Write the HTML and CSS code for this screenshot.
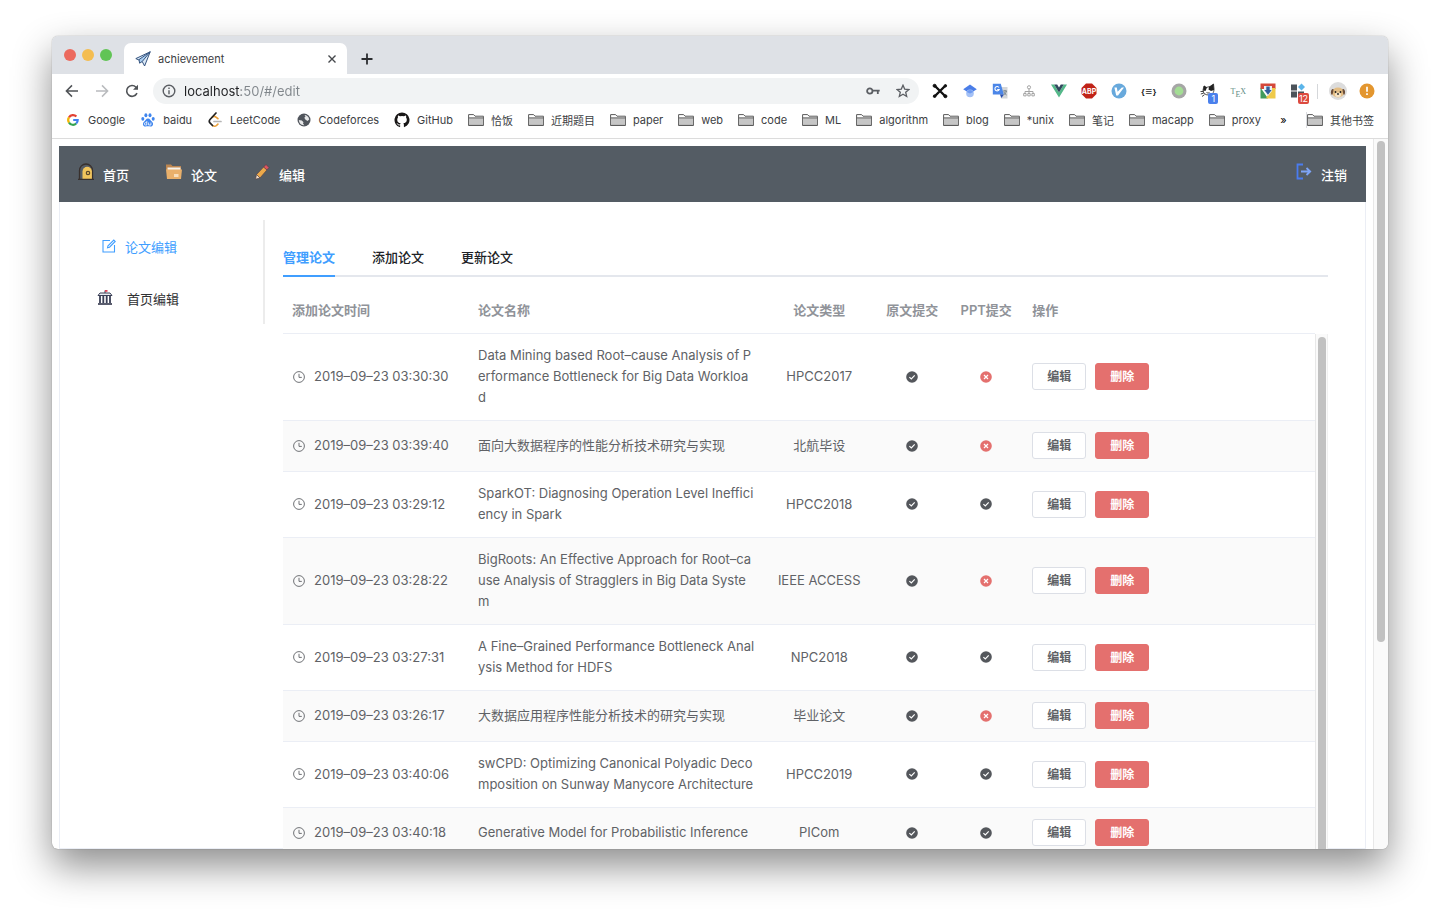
FILE: index.html
```html
<!DOCTYPE html>
<html lang="zh-CN">
<head>
    <meta charset="UTF-8">
    <meta name="viewport" content="width=device-width, initial-scale=1.0">
    <title>achievement</title>
    <link rel="stylesheet" href="styles.css">
</head>
<body>
    <svg class="sprite" width="0" height="0" aria-hidden="true">
        <symbol id="folder" viewBox="0 0 16 14">
            <path d="M.6 12.4V1.6h5l1.4 1.6h8.4v9.2z" fill="#fff" stroke="#5a5a5a" stroke-width="1"/>
            <path d="M1 5h14v7H1z" fill="#c6c6c6"/>
            <path d="M.6 4.9h14.8M.6 12.4h14.8" stroke="#5a5a5a" fill="none"/>
        </symbol>
        <symbol id="clock" viewBox="0 0 12 12">
            <circle cx="6" cy="6" r="5.4"/>
            <path d="M6 2.8v3.6h2.8"/>
        </symbol>
        <symbol id="check" viewBox="0 0 12 12">
            <circle cx="6" cy="6" r="5.8" fill="#54575c"/>
            <path d="M3.4 6.1l1.9 1.8 3.4-3.5" fill="none" stroke="#fff" stroke-width="1.2"/>
        </symbol>
        <symbol id="cross" viewBox="0 0 12 12">
            <circle cx="6" cy="6" r="5.8" fill="#e4706e"/>
            <path d="M4 4l4 4M8 4L4 8" fill="none" stroke="#fff" stroke-width="1.2"/>
        </symbol>
    </svg>

    <div class="window">
        <div class="tab-strip">
            <div class="lights">
                <span class="light red"></span>
                <span class="light yellow"></span>
                <span class="light green"></span>
            </div>
            <div class="browser-tab">
                <svg width="16" height="16" viewBox="0 0 16 16" fill="#dbe9f7" stroke="#35547f" stroke-width="1" stroke-linejoin="round"><path d="M.8 7.6L15.2.8 9.6 15 7.2 10.5z"/><path d="M4 8.6L15.2.8 7.2 10.5 4.6 12.2z" fill="#a9cdf0"/></svg>
                <span class="tab-title">achievement</span>
                <button class="icon-btn" aria-label="Close tab"><svg width="10" height="10" viewBox="0 0 10 10" stroke="#45484c" stroke-width="1.4"><path d="M1.5 1.5l7 7M8.5 1.5l-7 7"/></svg></button>
            </div>
            <button class="icon-btn new-tab" aria-label="New tab"><svg width="12" height="12" viewBox="0 0 12 12" stroke="#2b2d30" stroke-width="1.8"><path d="M6 .5v11M.5 6h11"/></svg></button>
        </div>

        <div class="toolbar">
            <div class="nav-buttons">
                <button class="icon-btn" aria-label="Back"><svg width="14" height="14" viewBox="0 0 14 14" fill="none" stroke="#505357" stroke-width="1.5"><path d="M13 7H1.8M7 1.4L1.4 7 7 12.6"/></svg></button>
                <button class="icon-btn" aria-label="Forward"><svg width="14" height="14" viewBox="0 0 14 14" fill="none" stroke="#b9bbbe" stroke-width="1.5"><path d="M1 7h11.2M7 1.4L12.6 7 7 12.6"/></svg></button>
                <button class="icon-btn" aria-label="Reload"><svg width="14" height="14" viewBox="0 0 14 14" fill="none" stroke="#505357" stroke-width="1.6"><path d="M12 9.2A5.4 5.4 0 1 1 11 3.2l1 1.2"/><path d="M13 .8v5H8z" fill="#505357" stroke="none"/></svg></button>
            </div>
            <div class="omnibox">
                <svg width="14" height="14" viewBox="0 0 14 14" fill="none" stroke="#5b5e63" stroke-width="1.4"><circle cx="7" cy="7" r="5.8"/><path d="M7 6.2v4M7 3.6v1.5"/></svg>
                <input class="url" type="text" value="localhost:50/#/edit" aria-label="Address">
                <button class="icon-btn" aria-label="Passwords"><svg width="14" height="10" viewBox="0 0 14 10" fill="none" stroke="#5b5e63" stroke-width="1.8"><circle cx="3.8" cy="5" r="2.7"/><path d="M6.5 4.6h7.2M11.8 4.6v3.4"/></svg></button>
                <button class="icon-btn" aria-label="Bookmark"><svg width="14" height="14" viewBox="0 0 14 14" fill="none" stroke="#5b5e63" stroke-width="1.3"><path d="M7 1.2l1.7 3.9 4.2.4-3.2 2.8 1 4.2L7 10.3l-3.7 2.2 1-4.2L1.1 5.500l4.2-.4z"/></svg></button>
            </div>
            <div class="extensions">
                <button class="icon-btn ext" aria-label="Extension"><svg width="16" height="16" viewBox="0 0 16 16" stroke="#111" fill="#111"><path d="M3 3l10 10M13 3L3 13" stroke-width="2.4"/><circle cx="2.600" cy="2.800" r="1.500"/><circle cx="13.400" cy="2.800" r="1.200"/><circle cx="2.600" cy="13.200" r="1.300"/><circle cx="13.400" cy="13.200" r="1.500"/></svg></button>
                <button class="icon-btn ext" aria-label="Scholar"><svg width="14" height="14" viewBox="0 0 14 14"><path d="M7 .5l6.800 4.700L7 9.500.2 5.200z" fill="#4a7de8"/><circle cx="7" cy="9.400" r="3.800" fill="#a4c1f6"/><path d="M3.600 8a4 4 0 0 1 6.800 0L7 9.500z" fill="#6e9af0"/></svg></button>
                <button class="icon-btn ext" aria-label="Translate"><svg width="16" height="16" viewBox="0 0 16 16"><path d="M6 4h9.500v11.500H9z" fill="#d4d6d8"/><path d="M.8.800h8l3 10.700h-11z" fill="#4b86e8"/><path d="M8 11.500h3.800L9.500 15z" fill="#2a50b0"/><path d="M7 4.500a2.200 2.200 0 1 0 .2 2H5.200" fill="none" stroke="#fff" stroke-width="1.100"/><path d="M11 8h4M13 7v1M14.300 8c-.3 2-1.300 3-2.600 4M12 9c.5 1.500 1.400 2.300 2.600 3" fill="none" stroke="#66747c" stroke-width=".8"/></svg></button>
                <button class="icon-btn ext" aria-label="Sitemap"><svg width="12" height="12" viewBox="0 0 12 12" fill="none" stroke="#a4a4a4"><circle cx="6" cy="2.300" r="1.600"/><path d="M6 4v4M2 8V6.500h8V8"/><path d="M.7 8.500h2.400v2.400H.7zM4.800 8.500h2.400v2.400H4.800zM8.900 8.500h2.400v2.400H8.900z"/></svg></button>
                <button class="icon-btn ext" aria-label="Vue"><svg width="16" height="14" viewBox="0 0 16 14"><path d="M0 .5h3.200L8 8.500l4.800-8H16L8 13.500z" fill="#54b889"/><path d="M3.200.500h3L8 3.400 9.800.5h3L8 8.500z" fill="#30475d"/></svg></button>
                <button class="icon-btn ext" aria-label="Adblock"><svg width="16" height="16" viewBox="0 0 16 16"><path d="M5 .5h6L15.500 5v6L11 15.500H5L.5 11V5z" fill="#c02318"/><text class="abp" x="8" y="10.500" text-anchor="middle">ABP</text></svg></button>
                <button class="icon-btn ext" aria-label="Vimium"><svg width="16" height="16" viewBox="0 0 16 16"><circle cx="8" cy="8" r="7.500" fill="#68a9dc"/><path d="M3.400 4.500h2.400l.8 4.200 4.200-4.200h2.200L7 12.500H5.200z" fill="#fff"/></svg></button>
                <button class="icon-btn ext json" aria-label="JSON">{≡}</button>
                <button class="icon-btn ext" aria-label="Recorder"><svg width="16" height="16" viewBox="0 0 16 16"><circle cx="8" cy="8" r="7.500" fill="#a6a6a6"/><circle cx="8" cy="8" r="4.400" fill="#a3dd94"/></svg></button>
                <button class="icon-btn ext" aria-label="Octo"><svg width="16" height="16" viewBox="0 0 16 16"><path d="M4 3l2 1.500 4-1L13.500 1l.5 5c0 4-2 6-5.500 6S3 10 3 7z" fill="#fff" stroke="#222" stroke-width=".8"/><path d="M4 2.500l3 2L5.500 8 3 7.500zM9 4l4.500-3 .5 6-3 1-2.500-1.500z" fill="#222"/><path d="M.5 8.500h3M.8 11l3-1M2 13.500l2.500-1.800" stroke="#333" stroke-width=".9"/><path d="M6.500 9.500l1.500.6 1.500-.6" fill="none" stroke="#222" stroke-width=".8"/></svg><span class="badge blue">1</span></button>
                <button class="icon-btn ext tex" aria-label="TeX"><span>T<sub>E</sub>X</span></button>
                <button class="icon-btn ext" aria-label="Downloads"><svg width="16" height="16" viewBox="0 0 16 16"><path d="M.5.500h15V6h-15z" fill="#d4483b"/><path d="M.5 4.500l7.500 11H.5z" fill="#419b5c"/><path d="M15.500 5v10.500H6L11 5z" fill="#efca4a"/><path d="M4 3h8v5l-4 5-4-5z" fill="#e8eef4"/><path d="M6.300 3.500h3.400V7h2L8 11.800 4.300 7h2z" fill="#315f9c"/></svg></button>
                <button class="icon-btn ext" aria-label="Apps"><svg width="16" height="16" viewBox="0 0 16 16" fill="#4c535a"><path d="M1 1.500h6v6H1zM1 8.500h6v6H1zM8 8.500h6v6H8z"/><path d="M11.500.5L15 4l-3.500 3.500L8 4z" fill="#5bb5ea"/></svg><span class="badge red-badge">12</span></button>
            </div>
            <span class="divider"></span>
            <button class="icon-btn avatar" aria-label="Profile"><svg width="18" height="18" viewBox="0 0 18 18"><circle cx="9" cy="9" r="9" fill="#dcdcdc"/><ellipse cx="9" cy="10.500" rx="6" ry="5" fill="#e3bd84"/><path d="M3.500 7C1.500 8 1.500 12 3 13c1-1 1.500-4 1.500-6zM14.500 7c2 1 2 5 .5 6-1-1-1.500-4-1.500-6z" fill="#6e4f3a"/><ellipse cx="9" cy="12.700" rx="3" ry="2.300" fill="#f6e3c5"/><circle cx="6.500" cy="10" r=".9" fill="#222"/><circle cx="11.500" cy="10" r=".9" fill="#222"/><circle cx="9" cy="12" r=".9" fill="#222"/></svg></button>
            <button class="icon-btn" aria-label="Update"><svg width="16" height="16" viewBox="0 0 16 16"><circle cx="8" cy="8" r="7.500" fill="#e3962f"/><path d="M8 3.800v5M8 10.300V12" stroke="#fff" stroke-width="1.700"/></svg></button>
        </div>

        <div class="bookmarks">
            <nav class="bookmark-list">
                <a href="#"><svg width="16" height="12" viewBox="0 0 12 12" fill="none" stroke-width="2.200"><path d="M2 3.400A4.700 4.700 0 0 1 9.400 2.600" stroke="#e34133"/><path d="M2 8.600a4.700 4.700 0 0 1 0-5.200" stroke="#f3b605"/><path d="M9.200 9.500A4.700 4.700 0 0 1 2 8.600" stroke="#34a351"/><path d="M6.200 6h4.500a4.700 4.700 0 0 1-1.500 3.500" stroke="#4280ef"/></svg><span>Google</span></a>
                <a href="#"><svg width="16" height="14" viewBox="0 0 14 14" fill="#3f85ee"><ellipse cx="1.800" cy="5.800" rx="1.500" ry="1.900"/><ellipse cx="4.900" cy="2.300" rx="1.500" ry="2"/><ellipse cx="9" cy="2.300" rx="1.500" ry="2"/><ellipse cx="12.200" cy="5.800" rx="1.500" ry="1.900"/><path d="M7 5.500c2 0 2.500 2 4 3.200 2 1.600 1 5-1.600 4.800-1.600-.3-3.200-.3-4.800 0C2 13.700 1 10.300 3 8.700 4.500 7.500 5 5.500 7 5.500z"/><path d="M5.800 8v4H4.500a1.100 1.100 0 0 1 0-2.300h1.300M7.600 9.500V12h2.300V9.500" fill="none" stroke="#fff" stroke-width=".8"/></svg><span>baidu</span></a>
                <a href="#"><svg width="16" height="16" viewBox="0 0 14 16" fill="none" stroke-width="1.700" stroke-linecap="round"><path d="M4 5.500c1.400-1.400 3-1.400 4.300-.2l1.600 1.400M4.500 13.500c1 1 3 1 4 0l1.400-1.300" stroke="#eba039"/><path d="M8 1L2 7.500c-1 1.200-1 2.300 0 3.400l2.500 2.600" stroke="#222"/><path d="M6 9.500h7" stroke="#b5b5b5"/></svg><span>LeetCode</span></a>
                <a href="#"><svg width="16" height="14" viewBox="0 0 14 14"><circle cx="7" cy="7" r="6.500" fill="#50555c"/><path d="M7.500 2c2 0 4.400 1.700 4.700 4.500L10.500 8 8.300 6.500l-1-1.700L8.500 3.500zM1.800 7l3 .6 1.700 1.600-.5 1.200 1.300 1.800C4 12.500 2 10.300 1.800 7z" fill="#e7e8e9"/></svg><span>Codeforces</span></a>
                <a href="#"><svg width="16" height="16" viewBox="0 0 16 16"><path fill="#191717" d="M8 .5a7.500 7.500 0 0 0-2.370 14.620c.37.070.510-.160.510-.36v-1.400c-2.090.45-2.530-.89-2.530-.89-.34-.87-.83-1.100-.83-1.100-.68-.47.050-.46.050-.46.750.050 1.150.770 1.150.770.670 1.150 1.760.82 2.190.63.070-.49.260-.82.480-1-1.660-.19-3.410-.84-3.410-3.710 0-.82.290-1.490.770-2.010-.080-.19-.33-.96.070-2 0 0 .630-.2 2.060.77a7.100 7.100 0 0 1 3.760 0c1.430-.97 2.060-.77 2.060-.77.4 1.040.15 1.810.070 2 .48.520.770 1.190.770 2.010 0 2.880-1.750 3.520-3.420 3.700.27.230.510.690.510 1.390v2.060c0 .2.140.44.520.36A7.500 7.500 0 0 0 8 .5z"/></svg><span>GitHub</span></a>
                <a href="#"><svg width="16" height="14"><use href="#folder"/></svg><span>恰饭</span></a>
                <a href="#"><svg width="16" height="14"><use href="#folder"/></svg><span>近期题目</span></a>
                <a href="#"><svg width="16" height="14"><use href="#folder"/></svg><span>paper</span></a>
                <a href="#"><svg width="16" height="14"><use href="#folder"/></svg><span>web</span></a>
                <a href="#"><svg width="16" height="14"><use href="#folder"/></svg><span>code</span></a>
                <a href="#"><svg width="16" height="14"><use href="#folder"/></svg><span>ML</span></a>
                <a href="#"><svg width="16" height="14"><use href="#folder"/></svg><span>algorithm</span></a>
                <a href="#"><svg width="16" height="14"><use href="#folder"/></svg><span>blog</span></a>
                <a href="#"><svg width="16" height="14"><use href="#folder"/></svg><span>*unix</span></a>
                <a href="#"><svg width="16" height="14"><use href="#folder"/></svg><span>笔记</span></a>
                <a href="#"><svg width="16" height="14"><use href="#folder"/></svg><span>macapp</span></a>
                <a href="#"><svg width="16" height="14"><use href="#folder"/></svg><span>proxy</span></a>
            </nav>
            <button class="icon-btn more">»</button>
            <a class="other" href="#"><svg width="16" height="14"><use href="#folder"/></svg><span>其他书签</span></a>
        </div>

        <div class="viewport">
            <div class="app">
                <header class="app-header">
                    <nav class="app-nav">
                        <a href="#"><svg width="16" height="18" viewBox="0 0 16 18"><path d="M1.500 16V7.500a6.500 6.500 0 0 1 13 0V16" fill="#565c64" stroke="#38302d" stroke-width="1.300"/><path d="M4.500 16V8.500a4.700 4.700 0 0 1 9.400 0V16z" fill="#f2c55c"/><path d="M0 16.300h16" stroke="#38302d" stroke-width="1.300"/><circle cx="10" cy="10" r="1.700" fill="none" stroke="#5c482a" stroke-width="1.200"/></svg><span>首页</span></a>
                        <a href="#"><svg width="16" height="18" viewBox="0 0 16 18"><path d="M0 1.500h5l1.500 1.500H15v4H0z" fill="#bd8650"/><path d="M1.500 4.500h13V8h-13z" fill="#f7f2ea"/><path d="M0 6.500h16L15 16H1z" fill="#e9b06b"/><path d="M8 11h4.500v3H8z" fill="#f8dfbd"/></svg><span>论文</span></a>
                        <a href="#"><svg width="16" height="18" viewBox="0 0 16 18"><path d="M2.500 11.500L9.500 4l3.500 3L6 15z" fill="#eca94a"/><path d="M9.500 4L12 1.500l3 3L13 7z" fill="#dc5460"/><path d="M2.500 11.500L6 15l-4.500 1.200z" fill="#f5dfc6"/><path d="M2.500 11.500L6 15M9.500 4L13 7M12 1.500l3 3L6 15l-4.500 1.200 1-4.700z" fill="none" stroke="#504048" stroke-width=".7"/></svg><span>编辑</span></a>
                    </nav>
                    <a class="logout" href="#"><svg width="16" height="18" viewBox="0 0 16 18" fill="none" stroke-width="1.800"><path d="M7 1.500H1.500v14H7" stroke="#4a7cf0"/><path d="M5 8.500h9M10.500 5l3.700 3.500-3.700 3.500" stroke="#7ea4f6"/></svg><span>注销</span></a>
                </header>

                <div class="app-body">
                    <aside class="side-menu">
                        <a class="active" href="#"><svg width="14" height="14" viewBox="0 0 14 14" fill="none" stroke="#409eff" stroke-width="1.100"><path d="M8 1.500H1v11.500h11.500V6"/><path d="M5.500 8.800l.5-2L11.800 1l1.400 1.400L7.500 8.200z"/></svg><span>论文编辑</span></a>
                        <a href="#"><svg width="16" height="16" viewBox="0 0 16 16"><path d="M1 5.500L3 3h10l2 2.500z" fill="#e9edf3" stroke="#3a3f55"/><path d="M3 6v7M6.300 6v7M9.700 6v7M13 6v7" stroke="#3a3f55" stroke-width="1.800"/><path d="M1 14h14" stroke="#30344a" stroke-width="1.600"/><path d="M8 3V.5" stroke="#3a3f55"/><path d="M8 0h2.500v1.800H8z" fill="#db4358"/></svg><span>首页编辑</span></a>
                    </aside>

                    <main class="content">
                        <div class="tabs" role="tablist">
                            <button class="tab selected" role="tab" aria-selected="true">管理论文</button>
                            <button class="tab" role="tab">添加论文</button>
                            <button class="tab" role="tab">更新论文</button>
                        </div>

                        <div class="table-wrap">
                            <table class="papers">
                                <thead>
                                    <tr>
                                        <th class="col-time">添加论文时间</th>
                                        <th class="col-name">论文名称</th>
                                        <th class="col-type">论文类型</th>
                                        <th class="col-flag">原文提交</th>
                                        <th class="col-flag">PPT提交</th>
                                        <th>操作</th>
                                    </tr>
                                </thead>
                                <tbody>
                                    <tr>
                                        <td><span class="time"><svg class="clock"><use href="#clock"/></svg>2019–09–23 03:30:30</span></td>
                                        <td>Data Mining based Root–cause Analysis of P<br>erformance Bottleneck for Big Data Workloa<br>d</td>
                                        <td class="center">HPCC2017</td>
                                        <td class="center"><svg class="flag"><use href="#check"/></svg></td>
                                        <td class="center"><svg class="flag"><use href="#cross"/></svg></td>
                                        <td><div class="actions"><button class="btn">编辑</button><button class="btn danger">删除</button></div></td>
                                    </tr>
                                    <tr>
                                        <td><span class="time"><svg class="clock"><use href="#clock"/></svg>2019–09–23 03:39:40</span></td>
                                        <td>面向大数据程序的性能分析技术研究与实现</td>
                                        <td class="center">北航毕设</td>
                                        <td class="center"><svg class="flag"><use href="#check"/></svg></td>
                                        <td class="center"><svg class="flag"><use href="#cross"/></svg></td>
                                        <td><div class="actions"><button class="btn">编辑</button><button class="btn danger">删除</button></div></td>
                                    </tr>
                                    <tr>
                                        <td><span class="time"><svg class="clock"><use href="#clock"/></svg>2019–09–23 03:29:12</span></td>
                                        <td>SparkOT: Diagnosing Operation Level Ineffici<br>ency in Spark</td>
                                        <td class="center">HPCC2018</td>
                                        <td class="center"><svg class="flag"><use href="#check"/></svg></td>
                                        <td class="center"><svg class="flag"><use href="#check"/></svg></td>
                                        <td><div class="actions"><button class="btn">编辑</button><button class="btn danger">删除</button></div></td>
                                    </tr>
                                    <tr>
                                        <td><span class="time"><svg class="clock"><use href="#clock"/></svg>2019–09–23 03:28:22</span></td>
                                        <td>BigRoots: An Effective Approach for Root–ca<br>use Analysis of Stragglers in Big Data Syste<br>m</td>
                                        <td class="center">IEEE ACCESS</td>
                                        <td class="center"><svg class="flag"><use href="#check"/></svg></td>
                                        <td class="center"><svg class="flag"><use href="#cross"/></svg></td>
                                        <td><div class="actions"><button class="btn">编辑</button><button class="btn danger">删除</button></div></td>
                                    </tr>
                                    <tr>
                                        <td><span class="time"><svg class="clock"><use href="#clock"/></svg>2019–09–23 03:27:31</span></td>
                                        <td>A Fine–Grained Performance Bottleneck Anal<br>ysis Method for HDFS</td>
                                        <td class="center">NPC2018</td>
                                        <td class="center"><svg class="flag"><use href="#check"/></svg></td>
                                        <td class="center"><svg class="flag"><use href="#check"/></svg></td>
                                        <td><div class="actions"><button class="btn">编辑</button><button class="btn danger">删除</button></div></td>
                                    </tr>
                                    <tr>
                                        <td><span class="time"><svg class="clock"><use href="#clock"/></svg>2019–09–23 03:26:17</span></td>
                                        <td>大数据应用程序性能分析技术的研究与实现</td>
                                        <td class="center">毕业论文</td>
                                        <td class="center"><svg class="flag"><use href="#check"/></svg></td>
                                        <td class="center"><svg class="flag"><use href="#cross"/></svg></td>
                                        <td><div class="actions"><button class="btn">编辑</button><button class="btn danger">删除</button></div></td>
                                    </tr>
                                    <tr>
                                        <td><span class="time"><svg class="clock"><use href="#clock"/></svg>2019–09–23 03:40:06</span></td>
                                        <td>swCPD: Optimizing Canonical Polyadic Deco<br>mposition on Sunway Manycore Architecture</td>
                                        <td class="center">HPCC2019</td>
                                        <td class="center"><svg class="flag"><use href="#check"/></svg></td>
                                        <td class="center"><svg class="flag"><use href="#check"/></svg></td>
                                        <td><div class="actions"><button class="btn">编辑</button><button class="btn danger">删除</button></div></td>
                                    </tr>
                                    <tr>
                                        <td><span class="time"><svg class="clock"><use href="#clock"/></svg>2019–09–23 03:40:18</span></td>
                                        <td>Generative Model for Probabilistic Inference</td>
                                        <td class="center">PICom</td>
                                        <td class="center"><svg class="flag"><use href="#check"/></svg></td>
                                        <td class="center"><svg class="flag"><use href="#check"/></svg></td>
                                        <td><div class="actions"><button class="btn">编辑</button><button class="btn danger">删除</button></div></td>
                                    </tr>
                                </tbody>
                            </table>
                            <div class="table-scroll"><div class="thumb"></div></div>
                        </div>
                    </main>
                </div>
            </div>
            <div class="page-scroll"><div class="thumb"></div></div>
        </div>
    </div>
</body>
</html>
```
FILE: styles.css
```css
* {
    margin: 0;
    padding: 0;
    box-sizing: border-box;
}

body {
    height: 100vh;
    padding: 36px 52px 69px;
    background: #fff;
    font-family: Inter, "Noto Sans CJK SC", sans-serif;
    font-size: 13px;
    color: #303133;
    overflow: hidden;
}

a {
    color: inherit;
    text-decoration: none;
}

svg {
    display: block;
    flex: none;
}

.sprite {
    position: absolute;
}

.icon-btn {
    display: flex;
    align-items: center;
    justify-content: center;
    border: none;
    background: none;
    font: inherit;
    cursor: pointer;
}

/* browser window */
.window {
    height: 100%;
    display: flex;
    flex-direction: column;
    background: #fff;
    border-radius: 6px;
    overflow: hidden;
    box-shadow: 0 0 1px rgba(0,0,0,0.5), 0 17px 38px rgba(0,0,0,0.45);
}

.tab-strip {
    flex: none;
    height: 38px;
    display: flex;
    align-items: flex-end;
    background: #dee1e6;
}

.lights {
    display: flex;
    gap: 6px;
    padding: 0 12px 13px 12px;
}

.light {
    width: 12px;
    height: 12px;
    border-radius: 50%;
}

.red { background: #ec6a5e; }
.yellow { background: #f4bd50; }
.green { background: #61c455; }

.browser-tab {
    width: 223px;
    height: 31px;
    display: flex;
    align-items: center;
    gap: 7px;
    padding: 0 10px 0 11px;
    background: #fff;
    border-radius: 7px 7px 0 0;
}

.tab-title {
    flex: 1;
    font-size: 11px;
    color: #3c4043;
}

.new-tab {
    margin-left: 14px;
    height: 31px;
}

.toolbar {
    flex: none;
    height: 34px;
    display: flex;
    align-items: center;
    padding: 0 13px;
}

.nav-buttons {
    display: flex;
    gap: 16px;
    width: 88px;
}

.omnibox {
    flex: 1;
    height: 26px;
    display: flex;
    align-items: center;
    gap: 8px;
    padding: 0 9px;
    background: #f1f3f4;
    border-radius: 13px;
}

.omnibox .icon-btn {
    margin-left: 8px;
}

/* host is dark, the rest of the address is grey */
.url {
    flex: 1;
    border: none;
    outline: none;
    font: inherit;
    color: transparent;
    background: linear-gradient(to right, #202124 57px, #80868b 57px);
    -webkit-background-clip: text;
    background-clip: text;
}

.extensions {
    width: 378px;
    margin-left: 11px;
    display: flex;
    justify-content: space-between;
}

.ext {
    width: 20px;
    height: 20px;
    position: relative;
}

.abp {
    font-size: 7px;
    font-weight: 700;
    fill: #fff;
}

.json {
    font-size: 8px;
    font-weight: 700;
    color: #222;
}

.tex {
    font-family: "Liberation Serif", serif;
    font-size: 8px;
    color: #5d8b82;
}

.tex sub {
    font-size: 8px;
    line-height: 1px;
}

.badge {
    position: absolute;
    left: 10px;
    top: 12px;
    height: 11px;
    padding: 0 3px;
    border-radius: 2px;
    color: #fff;
    font-size: 9px;
    line-height: 11px;
}

.blue { background: #4a80ec; }

.red-badge {
    padding: 0 1px;
    background: #dc4a3f;
}

.divider {
    width: 1px;
    height: 15px;
    margin: 0 11px 0 9px;
    background: #d5d7da;
}

.avatar {
    margin-right: 12px;
}

.bookmarks {
    flex: none;
    height: 31px;
    display: flex;
    align-items: center;
    padding: 0 14px 6px 13px;
    border-bottom: 1px solid #dcdcdc;
    font-size: 11px;
    color: #3c4043;
}

.bookmark-list {
    flex: 1;
    display: flex;
    justify-content: space-between;
}

.bookmarks a {
    display: flex;
    align-items: center;
    gap: 7px;
    white-space: nowrap;
}

.more {
    width: 46px;
    height: 16px;
    border-right: 1px solid #dadce0;
}

/* page */
.viewport {
    flex: 1;
    min-height: 0;
    display: flex;
    overflow: hidden;
}

.app {
    flex: 1;
    margin: 7px 7px 0;
    border: 1px solid #ebeef5;
    border-top: none;
}

.app-header {
    height: 56px;
    margin: 0 -1px;
    display: flex;
    align-items: center;
    justify-content: space-between;
    padding: 0 19px;
    background: #545c64;
    color: #fff;
    font-weight: 500;
}

.app-nav {
    display: flex;
    gap: 37px;
}

.app-header a {
    display: flex;
    align-items: center;
    gap: 9px;
}

.app-header svg {
    margin-bottom: 4px;
}

.app-body {
    display: flex;
    align-items: flex-start;
    padding: 18px 37px 0 0;
}

.side-menu {
    width: 205px;
    height: 104px;
    border-right: 2px solid #ececec;
}

.side-menu a {
    height: 52px;
    display: flex;
    align-items: center;
    gap: 14px;
    padding-left: 37px;
}

.side-menu .active {
    gap: 9px;
    padding-left: 42px;
    color: #409eff;
}

.content {
    flex: 1;
    padding: 18px 0 0 18px;
}

.tabs {
    display: flex;
    gap: 37px;
    border-bottom: 2px solid #e4e7ed;
}

.tab {
    height: 39px;
    margin-bottom: -2px;
    border: none;
    border-bottom: 2px solid transparent;
    background: none;
    font: inherit;
    font-weight: 500;
    color: #202226;
    cursor: pointer;
}

.tab.selected {
    color: #409eff;
    border-color: #409eff;
    font-weight: 600;
}

.table-wrap {
    display: flex;
    padding-top: 12px;
}

.papers {
    flex: 1;
    table-layout: fixed;
    border-collapse: separate;
    border-spacing: 0;
    color: #606266;
    line-height: 21px;
}

.papers th {
    height: 45px;
    padding: 0 9px 2px;
    border-bottom: 1px solid #ebeef5;
    text-align: left;
    font-weight: 600;
    color: #909399;
    white-space: nowrap;
}

.papers .col-time { width: 186px; }
.papers .col-name { width: 290px; }
.papers .col-type { width: 112px; text-align: center; }
.papers .col-flag { width: 74px; text-align: center; }

.papers td {
    padding: 11px 9px 12px;
    border-bottom: 1px solid #ebeef5;
    white-space: nowrap;
}

.papers tr:nth-child(even) td {
    background: #fafafa;
}

.papers .center {
    text-align: center;
}

.time {
    display: flex;
    align-items: center;
    gap: 9px;
    padding-left: 1px;
}

.clock {
    width: 12px;
    height: 12px;
    fill: none;
    stroke: #606266;
    stroke-width: 0.9;
}

.flag {
    width: 12px;
    height: 12px;
    margin: 0 auto;
}

.actions {
    display: flex;
    gap: 9px;
}

.btn {
    width: 54px;
    height: 27px;
    border: 1px solid #dcdfe6;
    border-radius: 3px;
    background: #fff;
    color: #606266;
    font: inherit;
    font-size: 12px;
    font-weight: 700;
    cursor: pointer;
}

.btn.danger {
    background: #e4706e;
    border-color: #e4706e;
    color: #fff;
}

.table-scroll {
    width: 13px;
    margin-top: 45px;
    padding: 3px 2px 0;
    border-left: 1px solid #e8e8e8;
    border-right: 1px solid #f0f0f0;
    background: #fafafa;
}

.table-scroll .thumb {
    height: 100%;
}

.thumb {
    width: 8px;
    border-radius: 4px;
    background: #c1c1c1;
}

.page-scroll {
    width: 15px;
    padding: 2px 3px;
    border-left: 1px solid #e8e8e8;
    background: #fafafa;
}

.page-scroll .thumb {
    height: 71%;
}
```
